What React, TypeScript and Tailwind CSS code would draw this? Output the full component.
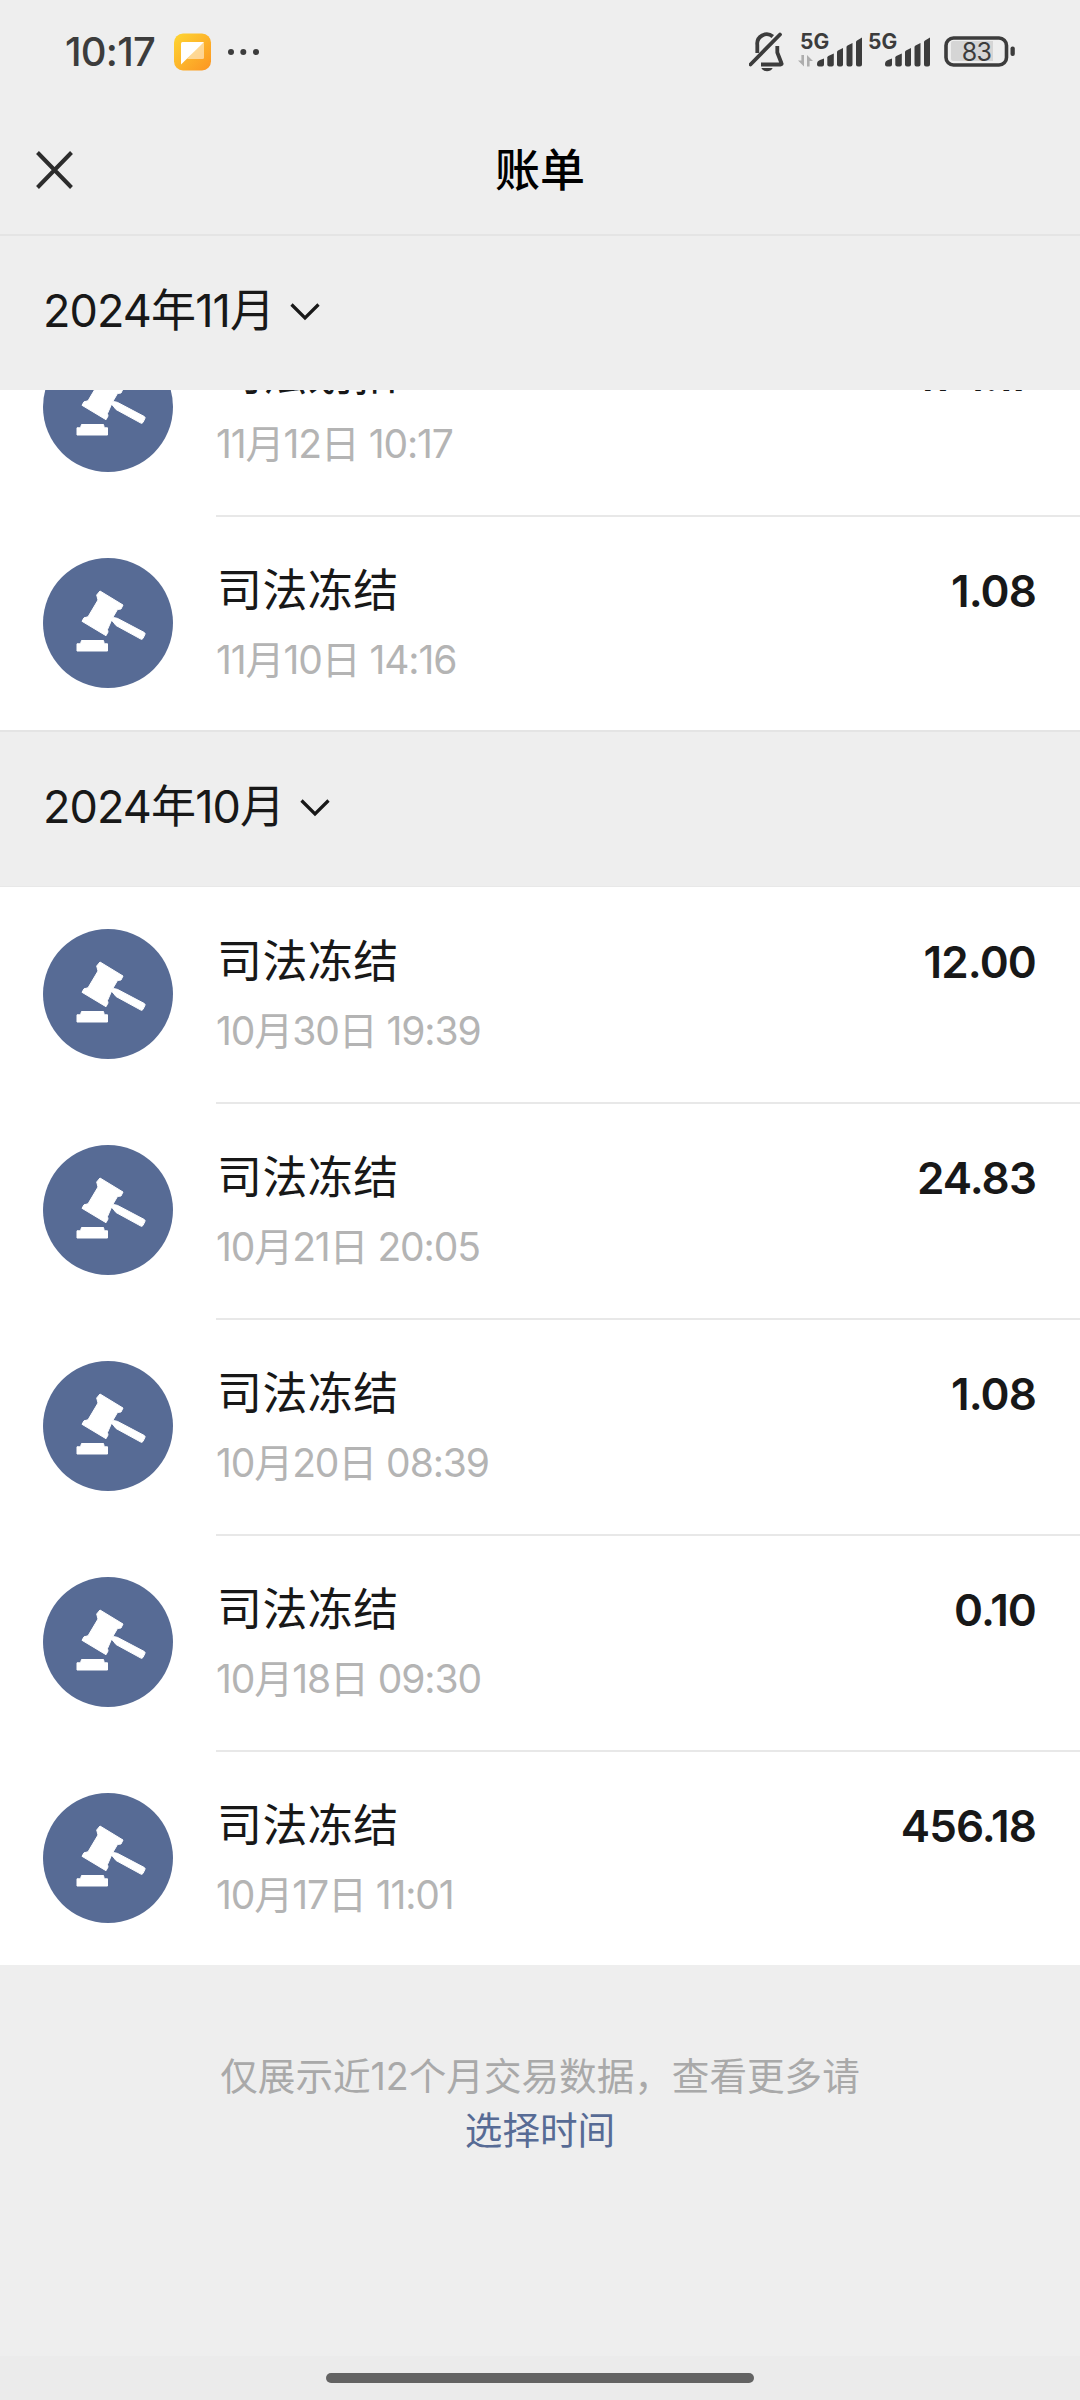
import React from 'react';

type Bill = { date: string; amount: string; title: string };

const november: Bill[] = [
  { title: '司法划扣', date: '11月12日 10:17', amount: '474.17' },
  { title: '司法冻结', date: '11月10日 14:16', amount: '1.08' },
];

const october: Bill[] = [
  { title: '司法冻结', date: '10月30日 19:39', amount: '12.00' },
  { title: '司法冻结', date: '10月21日 20:05', amount: '24.83' },
  { title: '司法冻结', date: '10月20日 08:39', amount: '1.08' },
  { title: '司法冻结', date: '10月18日 09:30', amount: '0.10' },
  { title: '司法冻结', date: '10月17日 11:01', amount: '456.18' },
];

const Signal = ({ arrows = false }: { arrows?: boolean }) => (
  <div className="relative h-[40px] w-[64px]">
    <span className="absolute left-[2px] top-0 text-[21px] font-bold leading-[20px]">5G</span>
    <svg className="block" width="64" height="40" viewBox="0 0 64 40" fill="#3c3c3c">
      {arrows && (
        <path
          d="M6 23v11.5l-6-6h3.4V23zM9 34.5V23l6 6h-3.4v5.5z"
          fill="#adadad"
        />
      )}
      <path d="M19 32q0-3 3-4l4-1.500v6q0 2-2 2h-3q-2 0-2-2z" />
      <path d="M29.300 25.500q0-1 1-1.500l5.500-2.400v11q0 2-2 2h-2.500q-2 0-2-2z" />
      <path d="M39 20q0-1 1-1.500l5-2.400v16.500q0 2-2 2h-2q-2 0-2-2z" />
      <path d="M48.500 15q0-1 1-1.500l5-2.600v21.700q0 2-2 2h-2q-2 0-2-2z" />
      <path d="M58 10q0-1 1-1.500l5-3v27q0 2-2 2h-2q-2 0-2-2z" />
    </svg>
  </div>
);

const StatusBar = () => (
  <div className="flex h-[104px] items-start pl-[65px] pr-[65px] text-[#3c3c3c]">
    <span className="mt-[31px] w-[109px] text-[40px] font-medium leading-[42px] tracking-[-0.8px]">10:17</span>
    {/* App icon */}
    <svg className="mt-[33px]" width="38" height="38" viewBox="0 0 38 38">
      <defs>
        <linearGradient id="note" x1="0" y1="0" x2="1" y2="1">
          <stop offset="0" stopColor="#fed632" />
          <stop offset="1" stopColor="#fc9423" />
        </linearGradient>
      </defs>
      <rect x="0" y="0.500" width="37" height="37" rx="9" fill="url(#note)" />
      <path d="M28 9h.5q1.500 0 1.500 1.500v14q0 1.500-1.500 1.500H13z" fill="#fff" fillOpacity=".5" />
      <path d="M8.500 9H30L7 31.500V10.500Q7 9 8.500 9z" fill="#fff" />
    </svg>
    <svg className="ml-[16px] mt-[49px]" width="32" height="6" viewBox="0 0 32 6" fill="#3c3c3c">
      <circle cx="3" cy="3" r="3" />
      <circle cx="15.300" cy="3" r="3" />
      <circle cx="28" cy="3" r="3" />
    </svg>

    <div className="ml-auto mt-[32px] flex items-start">
      <svg width="36" height="40" viewBox="0 0 36 40" fill="none" stroke="#3c3c3c" strokeWidth="3.800">
        <path d="M8.300 21v-8a9.500 9.500 0 0 1 15.500-8.500" />
        <path d="M1.500 32.500 31 2.500" strokeLinecap="round" />
        <path d="M28.300 14v6.500l4.200 10.700q.6 1.300-1 1.300H12" strokeLinejoin="round" />
        <path d="M12.300 36h11.400q-1.800 3.300-5.700 3.300T12.300 36z" fill="#3c3c3c" stroke="none" />
      </svg>
      <div className="ml-[13px] flex gap-[4px]">
        <Signal arrows />
        <Signal />
      </div>
      <div className="relative ml-[14px] h-[40px] w-[71px]">
        <svg width="71" height="40" viewBox="0 0 71 40">
          <rect x="2" y="6" width="60.500" height="27" rx="7.500" fill="none" stroke="#3c3c3c" strokeWidth="3.600" />
          <path d="M9 9h40v20H9q-2 0-2-2V11q0-2 2-2z" fill="#d5d5d5" />
          <rect x="66.500" y="14.500" width="4.300" height="9.500" rx="2" fill="#3c3c3c" />
        </svg>
        <span className="absolute left-0 top-[7px] w-[65px] text-center text-[25px] leading-[27px] tracking-[-0.8px]">83</span>
      </div>
    </div>
  </div>
);

const Gavel = () => (
  <svg className="block shrink-0" width="130" height="130" viewBox="0 0 130 130">
    <circle cx="65" cy="65" r="65" fill="#576b95" />
    <g fill="#fff" stroke="#fff" strokeWidth="1" strokeLinejoin="round">
      <path d="M57 33 80 47l-2 4-3.500.5-5 8.500-5 11.500.5 2.500-2 3.700L39 63.300l2-3.500 4-1L55 42l-1.300-5z" />
      <path d="M67.700 61.500l2.600-2 4 .8 27 14.200q1.200.8.6 2l-2 4q-.8 1.200-2 .6L73 67.500l-3-3.800z" />
      <path d="M38.500 82.500h22l.8 3.300H64.500V93H34v-7.200h3.500z" />
    </g>
  </svg>
);

const MonthHeader = ({ label }: { label: string }) => (
  <div className="flex h-[156px] shrink-0 items-center border-t-2 border-[#e4e4e4] bg-[#eeeeee] pl-[43px] pb-[4px]">
    <h2 className="text-[45px] leading-[60px] tracking-[-0.9px]">{label}</h2>
    <svg className="ml-[16px] mt-[2px]" width="30" height="18" viewBox="0 0 30 18" fill="none" stroke="#181818" strokeWidth="3.200">
      <path d="M1.500 1.500 15 15 28.500 1.500" />
    </svg>
  </div>
);

const BillRow = ({ bill, last }: { bill: Bill; last: boolean }) => (
  <div className="flex h-[216px] shrink-0 gap-[43px] pl-[43px]">
    <div className="pt-[41px]">
      <Gavel />
    </div>
    <div
      className={
        last
          ? 'flex flex-1 justify-between pt-[44px] pr-[44px]'
          : 'flex flex-1 justify-between border-b-2 border-[#e8e8e8] pt-[44px] pr-[44px]'
      }
    >
      <div>
        <h3 className="pl-[1px] text-[45px] leading-[60px] tracking-[0.4px]">{bill.title}</h3>
        <p className="mt-[12px] text-[39px] leading-[54px] tracking-[-1.1px] text-[#b4b4b4]">{bill.date}</p>
      </div>
      <span className="text-[44px] font-semibold leading-[61px] tracking-[-0.9px]">{bill.amount}</span>
    </div>
  </div>
);

const App = () => {
  return (
    <main className="flex h-[2400px] w-[1080px] flex-col overflow-hidden bg-[#eeeeee] font-[Inter,'Noto_Sans_CJK_SC',sans-serif] text-[#181818]">
      <StatusBar />
      <header className="grid h-[130px] grid-cols-3 items-center pl-[36px] pr-[36px]">
        <svg className="mt-[1px]" width="37" height="38" viewBox="0 0 37 38" fill="none" stroke="#2c2c2c" strokeWidth="4">
          <path d="M1.500 1.500 35.500 36.500M35.500 1.500 1.500 36.500" />
        </svg>
        <h1 className="pt-[4px] text-center text-[45px] font-medium leading-[60px] text-black">账单</h1>
      </header>

      <MonthHeader label="2024年11月" />
      {/* The list is scrolled under the sticky month bar */}
      <section className="flex h-[340px] flex-col justify-end overflow-hidden bg-white">
        {november.map((bill, i) => (
          <BillRow key={bill.date} bill={bill} last={i === november.length - 1} />
        ))}
        <div className="mb-[-3px]" />
      </section>

      <MonthHeader label="2024年10月" />
      <section className="flex h-[1079px] flex-col overflow-hidden border-t border-[#e8e8e8] bg-white pt-[1px]">
        {october.map((bill, i) => (
          <BillRow key={bill.date} bill={bill} last={i === october.length - 1} />
        ))}
      </section>

      <footer className="pt-[85px] text-center text-[37.600px] leading-[54px]">
        <p className="text-[#a9a9a9]">仅展示近12个月交易数据，查看更多请</p>
        <p className="text-[#576b95]">选择时间</p>
      </footer>

      <div className="mt-auto flex h-[44px] justify-center bg-[#ebebeb] pt-[17px]">
        <div className="h-[10px] w-[428px] rounded-full bg-[#636363]" />
      </div>
    </main>
  );
};

export default App;
